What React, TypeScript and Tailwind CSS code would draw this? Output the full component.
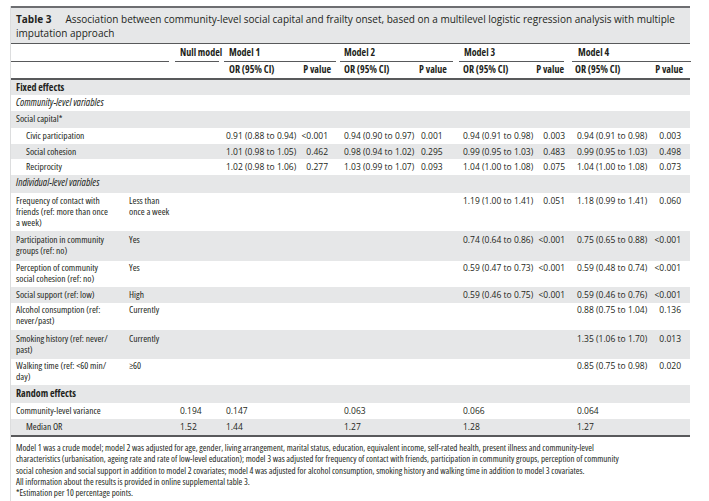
import React from "react";

type Row = {
  label: React.ReactNode;
  sub?: React.ReactNode;
  cells?: string[];
  grey?: boolean;
  kind?: "section" | "group" | "item" | "indent";
  h: string;
  pt?: string;
};

const rows: Row[] = [
  { label: "Fixed effects", kind: "section", grey: true, h: "h-[15px]" },
  { label: "Community-level variables", kind: "group", h: "h-[16px]" },
  { label: "Social capital*", grey: true, h: "h-[17px]" },
  {
    label: "Civic participation",
    kind: "indent",
    h: "h-[16px]",
    cells: ["", "0.91 (0.88 to 0.94)", "<0.001", "0.94 (0.90 to 0.97)", "0.001", "0.94 (0.91 to 0.98)", "0.003", "0.94 (0.91 to 0.98)", "0.003"],
  },
  {
    label: "Social cohesion",
    kind: "indent",
    grey: true,
    h: "h-[15px]",
    cells: ["", "1.01 (0.98 to 1.05)", "0.462", "0.98 (0.94 to 1.02)", "0.295", "0.99 (0.95 to 1.03)", "0.483", "0.99 (0.95 to 1.03)", "0.498"],
  },
  {
    label: "Reciprocity",
    kind: "indent",
    h: "h-[16px]",
    cells: ["", "1.02 (0.98 to 1.06)", "0.277", "1.03 (0.99 to 1.07)", "0.093", "1.04 (1.00 to 1.08)", "0.075", "1.04 (1.00 to 1.08)", "0.073"],
  },
  { label: "Individual-level variables", kind: "group", grey: true, h: "h-[18px]" },
  {
    label: (
      <>
        Frequency of contact with
        <br />
        friends (ref: more than once
        <br />a week)
      </>
    ),
    sub: (
      <>
        Less than
        <br />
        once a week
      </>
    ),
    h: "h-[38px]",
    cells: ["", "", "", "", "", "1.19 (1.00 to 1.41)", "0.051", "1.18 (0.99 to 1.41)", "0.060"],
  },
  {
    label: (
      <>
        Participation in community
        <br />
        groups (ref: no)
      </>
    ),
    sub: "Yes",
    grey: true,
    h: "h-[30px]",
    pt: "pt-[3px]",
    cells: ["", "", "", "", "", "0.74 (0.64 to 0.86)", "<0.001", "0.75 (0.65 to 0.88)", "<0.001"],
  },
  {
    label: (
      <>
        Perception of community
        <br />
        social cohesion (ref: no)
      </>
    ),
    sub: "Yes",
    h: "h-[26px]",
    pt: "pt-[1px]",
    cells: ["", "", "", "", "", "0.59 (0.47 to 0.73)", "<0.001", "0.59 (0.48 to 0.74)", "<0.001"],
  },
  {
    label: "Social support (ref: low)",
    sub: "High",
    grey: true,
    h: "h-[16px]",
    cells: ["", "", "", "", "", "0.59 (0.46 to 0.75)", "<0.001", "0.59 (0.46 to 0.76)", "<0.001"],
  },
  {
    label: (
      <>
        Alcohol consumption (ref:
        <br />
        never/past)
      </>
    ),
    sub: "Currently",
    h: "h-[27px]",
    pt: "pt-[1px]",
    cells: ["", "", "", "", "", "", "", "0.88 (0.75 to 1.04)", "0.136"],
  },
  {
    label: (
      <>
        Smoking history (ref: never/
        <br />
        past)
      </>
    ),
    sub: "Currently",
    grey: true,
    h: "h-[29px]",
    pt: "pt-[3px]",
    cells: ["", "", "", "", "", "", "", "1.35 (1.06 to 1.70)", "0.013"],
  },
  {
    label: (
      <>
        Walking time (ref: &lt;60 min/
        <br />
        day)
      </>
    ),
    sub: "≥60",
    h: "h-[26px]",
    pt: "pt-[1px]",
    cells: ["", "", "", "", "", "", "", "0.85 (0.75 to 0.98)", "0.020"],
  },
  { label: "Random effects", kind: "section", grey: true, h: "h-[18px]", pt: "pt-[3px]" },
  {
    label: "Community-level variance",
    h: "h-[16px]",
    cells: ["0.194", "0.147", "", "0.063", "", "0.066", "", "0.064", ""],
  },
  {
    label: "Median OR",
    kind: "indent",
    grey: true,
    h: "h-[16px]",
    cells: ["1.52", "1.44", "", "1.27", "", "1.28", "", "1.27", ""],
  },
];

const cellPad = [
  "pl-[7px]",
  "pl-[4px]",
  "text-right pr-[10px]",
  "pl-[6px]",
  "pl-[4px]",
  "pl-[6px]",
  "text-right pr-[6px]",
  "pl-[6px]",
  "text-right pr-[10px]",
];

const grid =
  "grid grid-cols-[113px_49px_49px_76px_40px_79px_40px_78px_36px_80px_40px]";

function BodyRow({ row }: { row: Row }) {
  const labelClass =
    row.kind === "section"
      ? "font-bold text-[10px]"
      : row.kind === "group"
        ? "italic text-[10.5px]"
        : "text-[9.5px]";
  const indent = row.kind === "indent" ? "pl-[15px]" : "pl-[5px]";
  return (
    <div
      className={`${grid} ${row.h} ${row.pt ?? "pt-[2px]"} ${row.grey ? "bg-[#e6e7e8]" : "bg-white"} leading-[11px]`}
    >
      <div className={`${indent} ${labelClass} whitespace-nowrap ${row.sub || row.cells ? "" : "col-span-11"}`}>
        {row.label}
      </div>
      {(row.sub || row.cells) && <div className="pl-[5px] text-[9.5px] whitespace-nowrap">{row.sub}</div>}
      {row.cells?.map((c, i) => (
        <div key={i} className={`${cellPad[i]} text-[8.5px] [font-stretch:88%] whitespace-nowrap`}>
          {c}
        </div>
      ))}
    </div>
  );
}

export default function App() {
  return (
    <div className="bg-white w-[709px] h-[501px] pt-[6px] text-[#231f20] font-['Open_Sans',sans-serif] [font-stretch:75%]">
      <div className="ml-[10px] w-[680px] border-l border-[#dcddde]">
        {/* Title */}
        <div className="border-t-2 border-[#6d6e71] bg-[#e6e7e8] pl-[5px] pr-[4px] pt-[4px] pb-[3px] text-[10px] leading-[14px] [font-stretch:88%]">
          <span className="font-bold mr-[14px]">Table 3</span>
          Association between community-level social capital and frailty onset, based on a multilevel logistic
          regression analysis with multiple
          <br />
          imputation approach
        </div>

        {/* Column headers */}
        <div className="border-t border-[#58595b] font-bold text-[10px] leading-[11px]">
          <div className={`${grid} h-[18px]`}>
            <div className="col-span-2 mr-[4px] border-b border-[#58595b]" />
            <div className="ml-[2px] mr-[3px] border-b border-[#58595b] pt-[3px] pl-[5px] whitespace-nowrap">
              Null model
            </div>
            <div className="col-span-2 ml-[2px] mr-[2px] border-b border-[#58595b] pt-[3px] pl-[5px]">Model 1</div>
            <div className="col-span-2 ml-[2px] mr-[4px] border-b border-[#58595b] pt-[3px] pl-[4px]">Model 2</div>
            <div className="col-span-2 ml-[2px] mr-[7px] border-b border-[#58595b] pt-[3px] pl-[5px]">Model 3</div>
            <div className="col-span-2 ml-[1px] border-b border-[#58595b] pt-[3px] pl-[6px]">Model 4</div>
          </div>
          <div className={`${grid} h-[18px] pt-[2px] border-b-2 border-[#58595b]`}>
            <div className="col-span-3" />
            <div className="pl-[7px] whitespace-nowrap">OR (95% CI)</div>
            <div className="text-right pr-[7px] whitespace-nowrap">P value</div>
            <div className="pl-[6px] whitespace-nowrap">OR (95% CI)</div>
            <div className="pl-[2px] whitespace-nowrap">P value</div>
            <div className="pl-[6px] whitespace-nowrap">OR (95% CI)</div>
            <div className="text-right pr-[7px] whitespace-nowrap">P value</div>
            <div className="pl-[4px] whitespace-nowrap">OR (95% CI)</div>
            <div className="text-right pr-[8px] whitespace-nowrap">P value</div>
          </div>
        </div>

        {/* Body */}
        <div className="border-b-2 border-[#58595b]">
          {rows.map((r, i) => (
            <BodyRow key={i} row={r} />
          ))}
        </div>

        {/* Footnotes */}
        <div className="pl-[5px] pt-[5px] pb-[3px] text-[9px] leading-[11.25px] whitespace-nowrap border-b border-[#e6e7e8]">
          Model 1 was a crude model; model 2 was adjusted for age, gender, living arrangement, marital status, education,
          equivalent income, self-rated health, present illness and community-level
          <br />
          characteristics (urbanisation, ageing rate and rate of low-level education); model 3 was adjusted for frequency of
          contact with friends, participation in community groups, perception of community
          <br />
          social cohesion and social support in addition to model 2 covariates; model 4 was adjusted for alcohol
          consumption, smoking history and walking time in addition to model 3 covariates.
          <br />
          All information about the results is provided in online supplemental table 3.
          <br />
          *Estimation per 10 percentage points.
        </div>
      </div>
    </div>
  );
}
